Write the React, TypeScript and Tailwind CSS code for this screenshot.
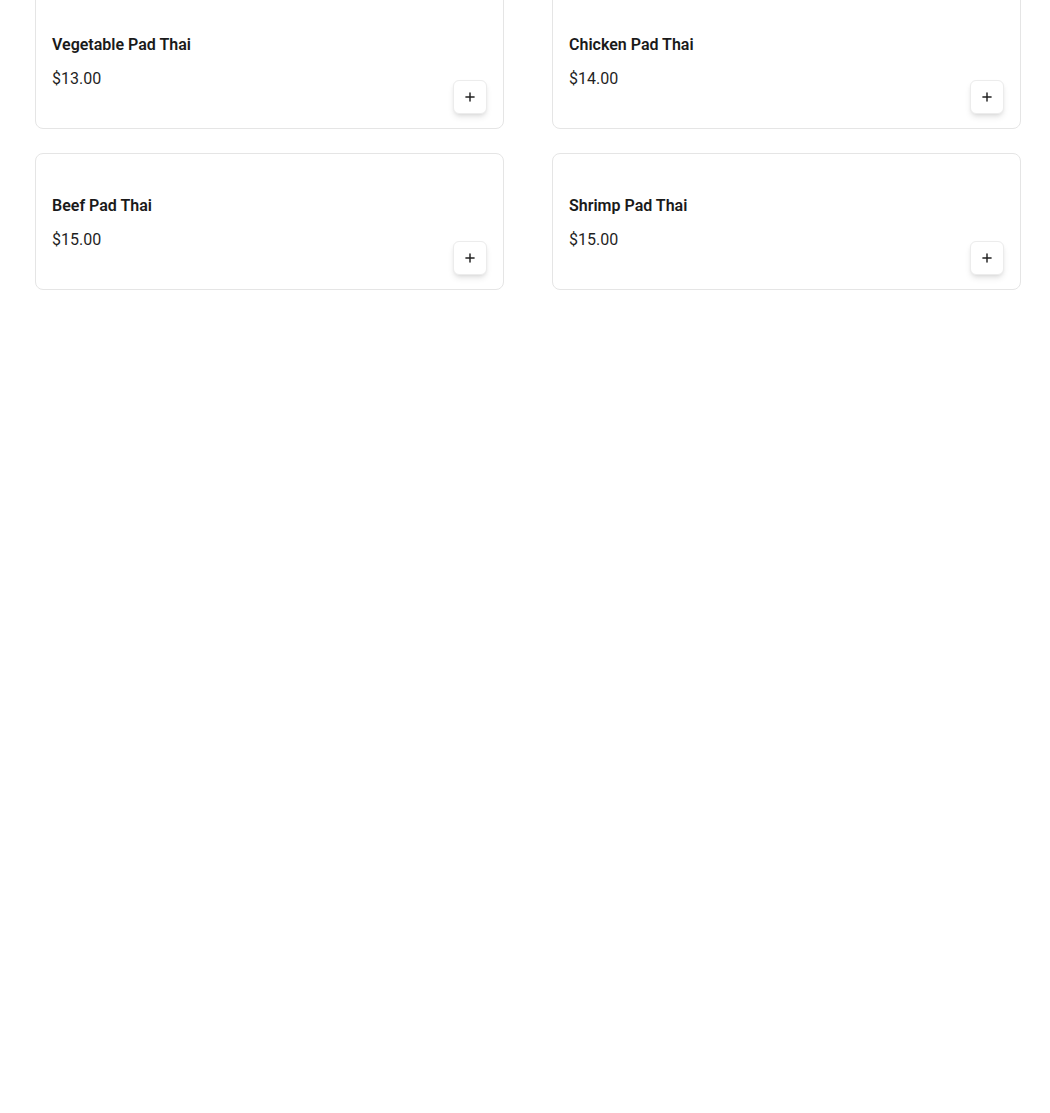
import { Plus } from "lucide-react";

const items = [
  { name: "Vegetable Pad Thai", price: 13 },
  { name: "Chicken Pad Thai", price: 14 },
  { name: "Beef Pad Thai", price: 15 },
  { name: "Shrimp Pad Thai", price: 15 },
];

export default function App() {
  return (
    <div
      className="min-h-[1113px] bg-white pl-[35px] pr-[29px]"
      style={{ fontFamily: "Roboto, 'Noto Sans', sans-serif" }}
    >
      <div className="-mt-[8px] grid grid-cols-2 gap-x-[48px] gap-y-[24px]">
        {items.map((item) => (
          <div
            key={item.name}
            className="flex h-[137px] items-start justify-between rounded-lg border border-[#e5e5e5] bg-white px-4 pb-[14px] pt-[42px]"
          >
            <div>
              <h3 className="text-base font-semibold leading-5 text-[#1a1a1a]">{item.name}</h3>
              <p className="mt-[12px] text-base leading-6 text-[#1f1f1f]">${item.price.toFixed(2)}</p>
            </div>
            <button className="flex h-[34px] w-[34px] items-center justify-center self-end rounded-md border border-[#ececec] bg-white shadow-md">
              <Plus className="h-[14px] w-[14px] text-[#222]" strokeWidth={2.5} />
            </button>
          </div>
        ))}
      </div>
    </div>
  );
}
